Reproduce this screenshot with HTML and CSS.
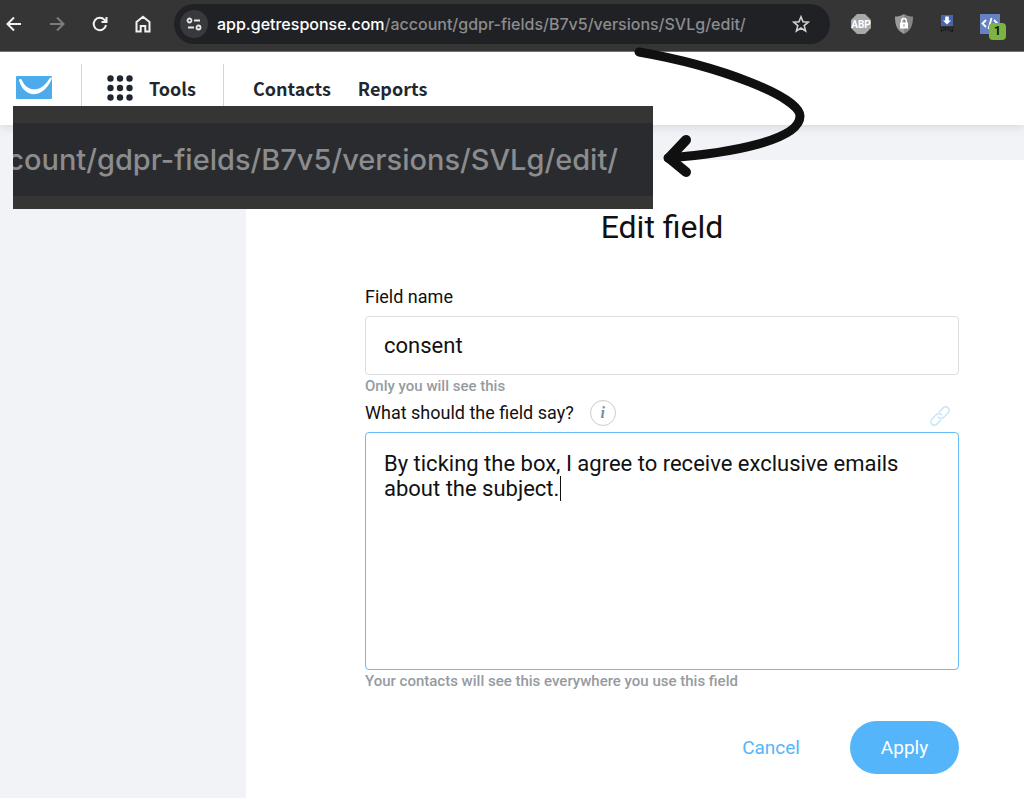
FILE: index.html
```
<!DOCTYPE html>
<html lang="en">
<head>
  <meta charset="UTF-8">
  <meta name="viewport" content="width=device-width, initial-scale=1.0">
  <title>Edit field</title>
  <link rel="stylesheet" href="styles.css">
</head>
<body>
  <div class="browser-bar">
    <button class="nav-btn" type="button" aria-label="Back">
      <svg width="18" height="18" viewBox="0 0 18 18" fill="none" stroke="#f1f1f1" stroke-width="2"><path d="M16 9H3M9 2.5 2.5 9 9 15.500"/></svg>
    </button>
    <button class="nav-btn" type="button" aria-label="Forward">
      <svg width="18" height="18" viewBox="0 0 18 18" fill="none" stroke="#7d7d7d" stroke-width="2"><path d="M2 9h13M9 2.500 15.500 9 9 15.500"/></svg>
    </button>
    <button class="nav-btn" type="button" aria-label="Reload">
      <svg width="18" height="18" viewBox="0 0 18 18" fill="none" stroke="#f1f1f1" stroke-width="2"><path d="M15 10a6.200 6.200 0 1 1-1.500-5.200L15.500 7M15.500 2v5h-5"/></svg>
    </button>
    <button class="nav-btn" type="button" aria-label="Home">
      <svg width="18" height="18" viewBox="0 0 18 18" fill="none" stroke="#f1f1f1" stroke-width="2"><path d="M2.500 7 9 1.800 15.500 7v9.500h-4.200V11H6.700v5.500H2.500z"/></svg>
    </button>
    <div class="address">
      <button class="site-info" type="button" aria-label="Site information">
        <svg width="16" height="14" viewBox="0 0 16 14" fill="none" stroke="#e8e8e8" stroke-width="1.800"><circle cx="3.500" cy="3.500" r="2"/><path d="M8 3.500h6M2 10.500h6"/><circle cx="12.500" cy="10.500" r="2"/></svg>
      </button>
      <div class="url" role="textbox" aria-label="Address" contenteditable="true" spellcheck="false"><span class="host">app.getresponse.com</span>/account/gdpr-fields/B7v5/versions/SVLg/edit/</div>
      <button class="star" type="button" aria-label="Bookmark">
        <svg width="18" height="18" viewBox="0 0 18 18" fill="none" stroke="#d0d0d0" stroke-width="1.600"><path d="m9 1.800 2 5 5.300.4-4.100 3.400 1.400 5.300L9 13l-4.600 2.900 1.400-5.300L1.700 7.200 7 6.800z"/></svg>
      </button>
    </div>
    <div class="extensions">
      <button class="ext" type="button" aria-label="ABP">
        <svg width="20" height="20" viewBox="0 0 20 20"><path fill="#a9a9a9" d="M6 0h8l6 6v8l-6 6H6l-6-6V6z"/><text class="abp" x="10" y="13.500">ABP</text></svg>
      </button>
      <button class="ext" type="button" aria-label="Shield">
        <svg width="20" height="20" viewBox="0 0 20 20"><path fill="#858585" d="M10 0c3 2 6 2.500 9 2.500 0 9-2 14-9 17.500z"/><path fill="#9a9a9a" d="M10 0C7 2 4 2.500 1 2.500c0 9 2 14 9 17.500z"/><rect x="6" y="8.500" width="8" height="6" fill="#fff"/><path d="M7.700 9V6.800a2.300 2.300 0 0 1 4.600 0V9" fill="none" stroke="#fff" stroke-width="1.500"/><path d="M10 10.500v2" stroke="#777"/></svg>
      </button>
      <button class="ext" type="button" aria-label="Save as png">
        <svg width="20" height="20" viewBox="0 0 20 20"><path fill="#4865ad" d="M4 1h12v11H4z"/><path fill="#fff" d="M8.200 2.500h3.600v4H14l-4 4-4-4h2.200z"/><text class="png" x="10" y="17">png</text></svg>
      </button>
      <button class="ext" type="button" aria-label="Code, 1 item">
        <svg width="20" height="20" viewBox="0 0 20 20"><path fill="#6782c4" d="M0 0h20v20H0z"/><path d="M6 6 2.500 9.500 6 13M11.500 4l-3 11M14 6l3.500 3.500L14 13" fill="none" stroke="#fff" stroke-width="1.800"/></svg>
        <span class="ext-count">1</span>
      </button>
    </div>
  </div>

  <header class="header">
    <a class="logo" href="#" aria-label="Home page">
      <svg width="36" height="23" viewBox="0 0 36 23"><rect width="36" height="23" rx="1" fill="#4dabeb"/><path fill="#fff" d="M3 4.500c0-2 2.300-2 3-.3 5 12 19 13 27.500-1.700 1-1.500 2.500-1.500 2.500 0C28 22 9 24 3 4.500z"/></svg>
    </a>
    <a class="tools" href="#">
      <svg width="26" height="26" viewBox="0 0 26 26" fill="#202730"><circle cx="3.500" cy="3.500" r="3.200"/><circle cx="13" cy="3.500" r="3.200"/><circle cx="22.500" cy="3.500" r="3.200"/><circle cx="3.500" cy="13" r="3.200"/><circle cx="13" cy="13" r="3.200"/><circle cx="22.500" cy="13" r="3.200"/><circle cx="3.500" cy="22.500" r="3.200"/><circle cx="13" cy="22.500" r="3.200"/><circle cx="22.500" cy="22.500" r="3.200"/></svg>
      Tools
    </a>
    <nav class="menu">
      <a href="#">Contacts</a>
      <a href="#">Reports</a>
    </nav>
  </header>

  <main class="page">
    <form class="panel">
      <h1>Edit field</h1>
      <label for="fieldName">Field name</label>
      <input type="text" id="fieldName" name="fieldName" value="consent">
      <p class="hint">Only you will see this</p>
      <div class="label-row">
        <label for="fieldText">What should the field say?</label>
        <button class="info" type="button" aria-label="More information">i</button>
        <button class="link-btn" type="button" aria-label="Insert link">
          <svg width="22" height="22" viewBox="0 0 22 22" fill="none" stroke="#c8e6fb" stroke-width="1.500"><g transform="rotate(-45 11 11)"><path d="M9 14.500H3a3.500 3.500 0 0 1 0-7h6.500a3.500 3.500 0 0 1 3.300 4.500"/><path d="M13 7.500h6a3.500 3.500 0 0 1 0 7h-6.500A3.500 3.500 0 0 1 9.200 10"/></g></svg>
        </button>
      </div>
      <div class="text-wrap">
        <textarea id="fieldText" name="fieldText" spellcheck="false">By ticking the box, I agree to receive exclusive emails
about the subject.</textarea>
        <span class="caret"></span>
      </div>
      <p class="hint">Your contacts will see this everywhere you use this field</p>
      <div class="actions">
        <button class="cancel" type="button">Cancel</button>
        <button class="apply" type="submit">Apply</button>
      </div>
    </form>
  </main>

  <!-- enlarged part of the address -->
  <div class="callout"><div class="callout-text">count/gdpr-fields/B7v5/versions/SVLg/edit/</div></div>
  <svg class="arrow" width="180" height="136" viewBox="0 0 180 136" fill="none" stroke="#101010" stroke-linecap="round" stroke-linejoin="round">
    <path stroke-width="9" d="M9 8C90 22 170 53 170 72 170 96 102 109 38 114"/>
    <path stroke-width="10" d="M56 96 39 114 56 128"/>
  </svg>
</body>
</html>
```
FILE: styles.css
```
* {
  box-sizing: border-box;
}
body {
  font-family: Roboto, Arial, sans-serif;
  background-color: #f2f3f7;
  color: #111;
  margin: 0;
  min-height: 100vh;
  display: flex;
  flex-direction: column;
  position: relative;
  overflow-x: hidden;
}
button {
  font-family: inherit;
  background: none;
  border: none;
  padding: 0;
  cursor: pointer;
}
svg {
  display: block;
}
a {
  color: inherit;
  text-decoration: none;
}

/* browser bar */
.browser-bar {
  display: flex;
  align-items: center;
  height: 52px;
  padding: 0 24px 4px 5px;
  background-color: #353535;
  border-bottom: 1px solid #777;
}
.nav-btn {
  width: 18px;
  margin-right: 25px;
  flex: none;
}
.address {
  display: flex;
  align-items: center;
  flex: 1;
  min-width: 0;
  height: 40px;
  margin-left: -3px;
  padding: 0 20px 0 6px;
  border-radius: 20px;
  background-color: #202125;
}
.site-info {
  display: flex;
  align-items: center;
  justify-content: center;
  width: 28px;
  height: 28px;
  border-radius: 50%;
  background-color: #38393c;
  flex: none;
}
.url {
  flex: 1;
  min-width: 0;
  margin-left: 9px;
  overflow: hidden;
  white-space: nowrap;
  font-family: Inter, sans-serif;
  font-size: 16px;
  font-weight: 500;
  color: #8b8c8e;
  outline: none;
}
.host {
  color: #fff;
}
.star {
  flex: none;
}
.extensions {
  display: flex;
  gap: 23px;
  margin-left: 21px;
}
.ext {
  position: relative;
}
.abp {
  font: bold 10px Roboto, sans-serif;
  fill: #fff;
  text-anchor: middle;
}
.png {
  font: 8px Roboto, sans-serif;
  fill: #111;
  text-anchor: middle;
}
.ext-count {
  position: absolute;
  left: 9px;
  top: 9px;
  width: 17px;
  height: 17px;
  border-radius: 4px;
  background-color: #7cb342;
  color: #111;
  font-size: 12px;
  font-weight: bold;
  line-height: 17px;
}

/* header */
.header {
  display: flex;
  align-items: stretch;
  height: 73px;
  padding: 12px 16px 0;
  background-color: #fff;
  box-shadow: 0 1px 10px rgba(60, 80, 100, 0.2);
  font-family: "Noto Sans CJK SC", sans-serif;
  font-size: 18px;
  font-weight: bold;
  color: #202730;
}
.logo,
.tools,
.menu {
  display: flex;
  align-items: center;
  padding-bottom: 14px;
}
.logo {
  padding-right: 29px;
  border-right: 1px solid #d5d5d5;
}
.tools {
  gap: 16px;
  padding-left: 25px;
  padding-right: 27px;
  border-right: 1px solid #d5d5d5;
}
.menu {
  gap: 27px;
  padding-left: 29px;
}

/* form */
.page {
  flex: 1;
  padding: 35px 0 0 246px;
  display: flex;
}
.panel {
  flex: 1;
  min-width: 0;
  padding: 48px 65px 24px 119px;
  background-color: #fff;
}
h1 {
  margin: 0 0 39px;
  font-size: 32px;
  line-height: 38px;
  font-weight: normal;
  text-align: center;
}
label {
  font-size: 18px;
  line-height: 24px;
}
.panel > label {
  display: block;
  margin-bottom: 7px;
}
input[type="text"],
textarea {
  display: block;
  width: 100%;
  border: 1px solid #dedede;
  border-radius: 4px;
  background-color: #fff;
  color: #111;
  font-family: inherit;
  font-size: 22px;
  outline: none;
}
input[type="text"] {
  height: 59px;
  padding: 0 18px;
}
.hint {
  margin: 0;
  font-size: 15px;
  font-weight: 500;
  line-height: 22px;
  color: #969ba1;
}
.label-row {
  display: flex;
  align-items: center;
  height: 32px;
  margin-bottom: 3px;
}
.info {
  width: 26px;
  height: 26px;
  margin-left: 16px;
  border: 1px solid #ccc;
  border-radius: 50%;
  font: italic bold 16px "Liberation Serif", serif;
  color: #7d8fa3;
}
.link-btn {
  align-self: flex-end;
  margin-left: auto;
  margin-right: 8px;
  padding-bottom: 2px;
}
.text-wrap {
  position: relative;
}
textarea {
  height: 238px;
  padding: 18px;
  border-color: #66bdf8;
  line-height: 25px;
  resize: none;
}
.caret {
  position: absolute;
  left: 195px;
  top: 44px;
  width: 1px;
  height: 25px;
  background-color: #111;
}
.actions {
  display: flex;
  justify-content: flex-end;
  align-items: center;
  gap: 50px;
  margin-top: 29px;
}
.cancel,
.apply {
  font-size: 19px;
  color: #54b5fa;
}
.apply {
  width: 109px;
  height: 53px;
  border-radius: 27px;
  background-color: #54b5fa;
  color: #fff;
}

/* notes drawn over the page */
.callout {
  position: absolute;
  left: 13px;
  top: 106px;
  width: 640px;
  padding: 17px 0 13px;
  background-color: #353535;
}
.callout-text {
  display: flex;
  justify-content: flex-end;
  padding-right: 35px;
  overflow: hidden;
  background-color: #2a2b2e;
  color: #8b8c8e;
  font-family: Inter, sans-serif;
  font-size: 29px;
  font-weight: 500;
  line-height: 73px;
  white-space: nowrap;
}
.arrow {
  position: absolute;
  left: 630px;
  top: 44px;
}
```
